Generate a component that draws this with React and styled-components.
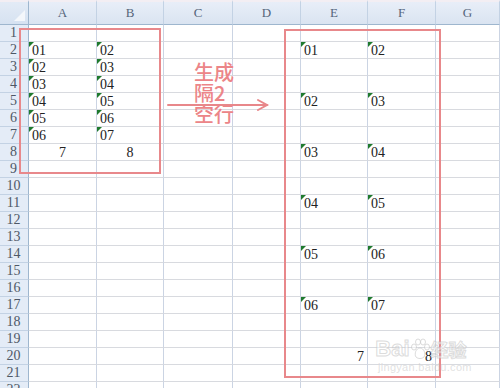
import React from "react";
import styled, { createGlobalStyle } from "styled-components";

const GlobalStyle = createGlobalStyle`
  html, body { margin: 0; padding: 0; background: #fff; }
  body { font-family: "Liberation Serif", "Noto Sans CJK SC", serif; }
`;

const COLS = [29, 68, 67, 69, 68, 67, 68, 64];
const LETTERS = ["A", "B", "C", "D", "E", "F", "G"];
const ROW_COUNT = 22;

const Sheet = styled.div`
  position: relative;
  width: 500px;
  height: 388px;
  overflow: hidden;
  background: #fff;
`;

const Grid = styled.div`
  display: grid;
  grid-template-columns: ${COLS.map((c) => c + "px").join(" ")};
  grid-template-rows: 25px repeat(${ROW_COUNT}, 17px);
`;

const Corner = styled.div`
  position: relative;
  box-sizing: border-box;
  border-top: 2px solid #f3eef3;
  background: linear-gradient(#e3ebf6, #d6e2f1);
  border-right: 1px solid #9eb6ce;
  border-bottom: 1px solid #9eb6ce;
  &::after {
    content: "";
    position: absolute;
    right: 3px;
    bottom: 3px;
    width: 0;
    height: 0;
    border-left: 11px solid transparent;
    border-bottom: 11px solid #f4f7fb;
  }
`;

const ColHeader = styled.div`
  box-sizing: border-box;
  border-top: 2px solid #f3eef3;
  background: linear-gradient(#e8eef8, #dae4f1);
  border-right: 1px solid #c3d2e4;
  border-bottom: 1px solid #9eb6ce;
  display: flex;
  align-items: center;
  justify-content: center;
  font-family: "Liberation Serif", serif;
  font-size: 13px;
  color: #55657a;
`;

const RowHeader = styled.div`
  box-sizing: border-box;
  background: #e4ecf7;
  border-right: 1px solid #9eb6ce;
  border-bottom: 1px solid #c3d2e4;
  display: flex;
  align-items: center;
  justify-content: center;
  padding-right: 1px;
  font-family: "Liberation Serif", serif;
  font-size: 14px;
  line-height: 16px;
  color: #4e5866;
`;

const Cell = styled.div`
  position: relative;
  box-sizing: border-box;
  border-right: 1px solid #cbd4e3;
  border-bottom: 1px solid #d8dadf;
  display: flex;
  align-items: flex-end;
  justify-content: ${(p) =>
    p.$align === "center" ? "center" : p.$align === "right" ? "flex-end" : "flex-start"};
  padding: 0 3px 0 3px;
  font-family: "Liberation Serif", serif;
  font-size: 14px;
  line-height: 15px;
  color: #222;
  white-space: nowrap;
`;

const Flag = styled.span`
  position: absolute;
  left: 0;
  top: 0;
  width: 0;
  height: 0;
  border-top: 5px solid #1f7a2e;
  border-right: 5px solid transparent;
`;

const Frame = styled.div`
  position: absolute;
  box-sizing: border-box;
  left: ${(p) => p.$left}px;
  top: ${(p) => p.$top}px;
  width: ${(p) => p.$w}px;
  height: ${(p) => p.$h}px;
  border: 2px solid #e8888b;
  pointer-events: none;
`;

const Label = styled.div`
  position: absolute;
  left: 194px;
  top: 61px;
  font-family: "Noto Sans CJK SC", sans-serif;
  font-weight: 500;
  font-size: 20px;
  line-height: 21px;
  color: #ec8588;
`;

const ArrowSvg = styled.svg`
  position: absolute;
  left: 166px;
  top: 98px;
`;

const Watermark = styled.div`
  position: absolute;
  left: 370px;
  top: 337px;
  display: flex;
  flex-direction: column;
  align-items: center;
  pointer-events: none;
`;

const MarkTop = styled.div`
  display: flex;
  align-items: center;
  font-family: "Liberation Sans", "Noto Sans CJK SC", sans-serif;
  font-weight: 700;
  font-size: 22px;
  line-height: 24px;
  color: rgba(255, 255, 255, 0.5);
  -webkit-text-stroke: 1px rgba(190, 190, 190, 0.55);
`;

const MarkCn = styled.span`
  font-family: "Noto Sans CJK SC", sans-serif;
  font-size: 18px;
  margin-left: 1px;
`;

const MarkUrl = styled.div`
  font-family: "Liberation Sans", sans-serif;
  font-size: 11px;
  line-height: 12px;
  margin-left: 8px;
  color: rgba(200, 200, 200, 0.55);
  letter-spacing: 0.3px;
`;

const DATA = {};
const put = (r, c, v, align = "left", flag = true) => {
  DATA[r + "-" + c] = { v, align, flag };
};
for (let i = 0; i < 6; i++) {
  put(2 + i, 0, "0" + (i + 1));
  put(2 + i, 1, "0" + (i + 2));
  put(2 + i * 3, 4, "0" + (i + 1));
  put(2 + i * 3, 5, "0" + (i + 2));
}
put(8, 0, "7", "center", false);
put(8, 1, "8", "center", false);
put(20, 4, "7", "right", false);
put(20, 5, "8", "right", false);

function Paw() {
  return (
    <svg width="20" height="22" viewBox="0 0 20 22">
      <g fill="rgba(255,255,255,0.5)" stroke="rgba(190,190,190,0.55)" strokeWidth="1">
        <ellipse cx="4" cy="9" rx="2.5" ry="3" />
        <ellipse cx="8" cy="4" rx="2.5" ry="3" />
        <ellipse cx="13" cy="4" rx="2.5" ry="3" />
        <ellipse cx="17" cy="9" rx="2.5" ry="3" />
        <path d="M10 10 C6 10 4 16 6 19 C8 21 12 21 14 19 C16 16 14 10 10 10 Z" />
      </g>
    </svg>
  );
}

export default function App() {
  const rows = [];
  for (let r = 1; r <= ROW_COUNT; r++) {
    rows.push(<RowHeader key={"h" + r}>{r}</RowHeader>);
    for (let c = 0; c < LETTERS.length; c++) {
      const d = DATA[r + "-" + c];
      rows.push(
        <Cell key={r + "-" + c} $align={d ? d.align : "left"}>
          {d && d.flag && <Flag />}
          {d ? d.v : null}
        </Cell>
      );
    }
  }
  return (
    <Sheet>
      <GlobalStyle />
      <Grid>
        <Corner />
        {LETTERS.map((l) => (
          <ColHeader key={l}>{l}</ColHeader>
        ))}
        {rows}
      </Grid>
      <Frame $left={19} $top={28} $w={142} $h={146} />
      <Frame $left={284} $top={29} $w={157} $h={349} />
      <Label>
        生成
        <br />
        隔2
        <br />
        空行
      </Label>
      <ArrowSvg width="106" height="16" viewBox="0 0 106 16">
        <g stroke="#e8878a" strokeWidth="2" fill="none" strokeLinecap="round">
          <line x1="2" y1="7" x2="101" y2="7" />
          <polyline points="92,2 101,7 92,12" />
        </g>
      </ArrowSvg>
      <Watermark>
        <MarkTop>
          Bai
          <Paw />
          <MarkCn>经验</MarkCn>
        </MarkTop>
        <MarkUrl>jingyan.baidu.com</MarkUrl>
      </Watermark>
    </Sheet>
  );
}
